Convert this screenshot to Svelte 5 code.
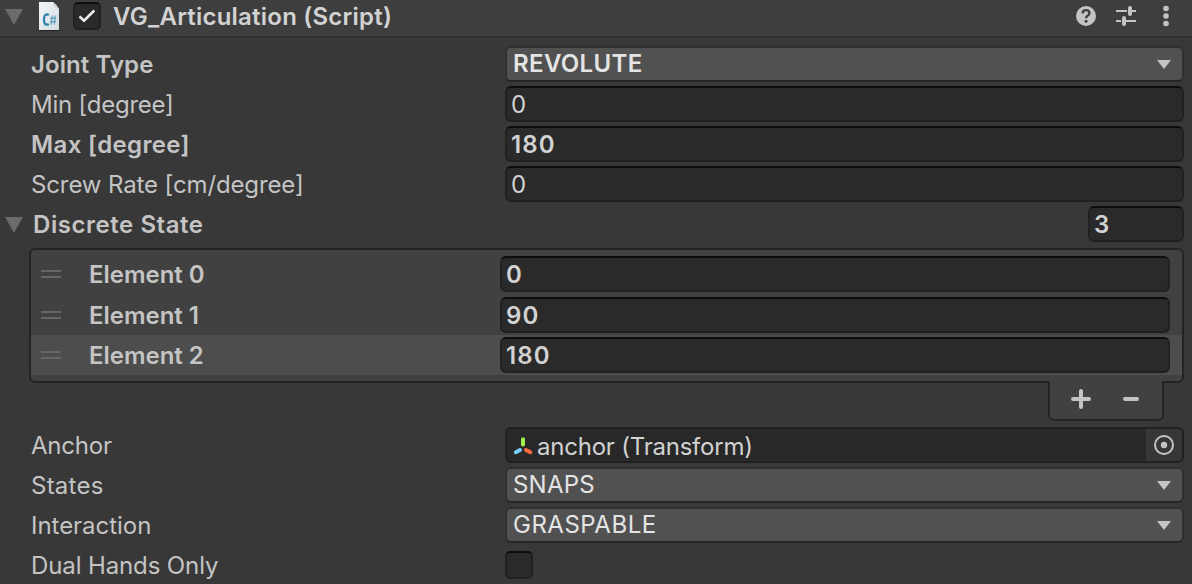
<script>
  const properties = [
    { label: 'Joint Type', value: 'REVOLUTE', kind: 'select', bold: true, track: 0.08, valueTrack: 0.35 },
    { label: 'Min [degree]', value: '0', kind: 'number', track: -0.24 },
    { label: 'Max [degree]', value: '180', kind: 'number', bold: true, track: 0.36, valueTrack: 1.1 },
    { label: 'Screw Rate [cm/degree]', value: '0', kind: 'number', track: -0.12 },
  ];
  const elements = [
    { label: 'Element 0', value: '0' },
    { label: 'Element 1', value: '90' },
    { label: 'Element 2', value: '180', selected: true },
  ];
  const options = [
    { label: 'States', value: 'SNAPS', kind: 'select', track: 0.25, valueTrack: 0.2 },
    { label: 'Interaction', value: 'GRASPABLE', kind: 'select', track: -0.03, valueTrack: 0.5 },
  ];
</script>

{#snippet foldout()}
  <svg class="foldout" width="18" height="16" viewBox="0 0 18 16"><path d="M0 0H18L9 16Z" fill="#6b6b6b" /></svg>
{/snippet}

{#snippet row(p)}
  <div class="row" class:bold={p.bold}>
    <span class="label" style:letter-spacing="{p.track}px">{p.label}</span>
    {#if p.kind === 'select'}
      <div class="select">
        <span style:letter-spacing="{p.valueTrack}px">{p.value}</span>
        <svg width="14" height="9" viewBox="0 0 14 9"><path d="M0 0H14L7 9Z" fill="#c4c4c4" /></svg>
      </div>
    {:else}
      <div class="field" style:letter-spacing="{p.valueTrack ?? 0}px">{p.value}</div>
    {/if}
  </div>
{/snippet}

<div class="inspector">
  <header>
    {@render foldout()}
    <svg class="script" width="22" height="30" viewBox="0 0 22 30">
      <defs>
        <linearGradient id="paper" x1="0" y1="0" x2="1" y2="1">
          <stop offset="0" stop-color="#f3f5f7" /><stop offset="1" stop-color="#d5dde2" />
        </linearGradient>
        <linearGradient id="fold" x1="0" y1="1" x2="1" y2="0">
          <stop offset="0" stop-color="#ffffff" /><stop offset="1" stop-color="#8b98a3" />
        </linearGradient>
      </defs>
      <path d="M1 1H15Q18 3 21 8V29H1Z" fill="url(#paper)" />
      <path d="M15 1Q17 5 16 7Q19 6.500 21 8Q18.500 3 15 1Z" fill="url(#fold)" />
      <path d="M1 29.500H21" stroke="#222" stroke-width="1" />
      <path d="M10.800 14Q9.800 13.300 8.800 13.300Q6 13.500 6 18.500Q6 23.600 8.800 23.700Q9.900 23.700 10.800 23" fill="none" stroke="#2e86ae" stroke-width="2.300" />
      <path d="M14.200 14.500L13.200 23.500M17.200 14.500L16.200 23.500M12.200 17.300H18.200M11.900 20.600H17.900" fill="none" stroke="#5a9fbe" stroke-width="1.200" />
    </svg>
    <div class="check">
      <svg width="18" height="14" viewBox="0 0 18 14"><path d="M1.500 7.300L6 11.700L16.300 1.500" fill="none" stroke="#eee" stroke-width="2.500" /></svg>
    </div>
    <h1>VG_Articulation (Script)</h1>
    <svg class="tools" width="104" height="24" viewBox="0 0 104 24">
      <circle cx="12" cy="12" r="10" fill="#c4c4c4" />
      <path d="M8.600 9.400Q8.600 6.200 12 6.200T15.400 9.200Q15.400 10.800 13.600 11.800Q12 12.700 12 14.200" fill="none" stroke="#3e3e3e" stroke-width="2.300" />
      <circle cx="12" cy="17.200" r="1.500" fill="#3e3e3e" />
      <path d="M42 7H53M58 7H62M42 17H47M52 17H62" stroke="#c4c4c4" stroke-width="2" />
      <path d="M56 4V10M50 14V20" stroke="#c4c4c4" stroke-width="4" stroke-linecap="round" />
      <g fill="#c4c4c4"><circle cx="92" cy="4.500" r="2.800" /><circle cx="92" cy="12" r="2.800" /><circle cx="92" cy="19.500" r="2.800" /></g>
    </svg>
  </header>

  <main>
    {#each properties as p}{@render row(p)}{/each}

    <div class="row bold state">
      {@render foldout()}
      <span class="label">Discrete State</span>
      <div class="field count">3</div>
    </div>

    <div class="list">
      {#each elements as e}
        <div class="element" class:selected={e.selected}>
          <i class="handle"></i>
          <span class="name">{e.label}</span>
          <div class="field">{e.value}</div>
        </div>
      {/each}
    </div>
    <div class="footer">
      <svg width="20" height="20" viewBox="0 0 20 20"><path d="M2 10H18M10 2V18" stroke="#c4c4c4" stroke-width="4" stroke-linecap="round" /></svg>
      <svg width="16" height="20" viewBox="0 0 16 20"><path d="M2 10H14" stroke="#c4c4c4" stroke-width="4" stroke-linecap="round" /></svg>
    </div>

    <div class="row">
      <span class="label anchor">Anchor</span>
      <div class="object">
        <svg class="axes" width="20" height="18" viewBox="0 0 20 18">
          <g stroke-width="4" stroke-linecap="round">
            <path d="M10 2.200V7.500" stroke="#a4f04c" />
            <path d="M2.800 15.200L7 13" stroke="#76cffb" />
            <path d="M13 13L17.300 15.200" stroke="#fb6b3c" />
          </g>
        </svg>
        <span>anchor (Transform)</span>
        <div class="picker">
          <svg width="20" height="20" viewBox="0 0 20 20"><circle cx="10" cy="10" r="9" fill="none" stroke="#c4c4c4" stroke-width="2" /><circle cx="10" cy="10" r="3.200" fill="#c4c4c4" /></svg>
        </div>
      </div>
    </div>
    {#each options as p}{@render row(p)}{/each}
    <div class="row">
      <span class="label hands">Dual Hands Only</span>
      <div class="check"></div>
    </div>
  </main>
</div>

<style>
  :global(body) { margin: 0; background: #383838; overflow: hidden; }
  .inspector {
    width: 1192px; height: 584px; overflow: hidden; box-sizing: border-box;
    background: #383838; color: #c4c4c4;
    font: 400 24px/36px Inter, sans-serif; letter-spacing: 0.3px; white-space: nowrap;
  }
  .inspector * { box-sizing: border-box; }
  svg { display: block; flex: none; }
  header {
    display: flex; align-items: flex-start; height: 38px; padding-left: 5px;
    background: #3e3e3e; border-bottom: 2px solid #303030;
  }
  header .foldout { margin-top: 9px; }
  .script { margin: 1px 0 0 15px; }
  header .check { margin: 2px 0 0 13px; }
  h1 { margin: -1px 0 0 12px; font-size: 24px; line-height: 36px; font-weight: 600; color: #d2d2d2; letter-spacing: 0.22px; }
  .tools { margin: 4px 14px 0 auto; }
  .check {
    display: flex; align-items: center; justify-content: center; flex: none;
    width: 28px; height: 28px; background: #2a2a2a; border: 2px solid #212121;
    border-top-color: #0d0d0d; border-radius: 5px;
  }
  main { padding: 6px 8px 0 0; }
  .row { display: flex; align-items: center; height: 40px; padding-left: 31px; }
  .label { width: 474px; flex: none; padding-top: 2px; }
  .anchor { letter-spacing: -0.2px; }
  .hands { letter-spacing: -0.12px; }
  .bold, .element { font-weight: 600; }
  .field, .select, .object {
    display: flex; align-items: center; flex: 1; min-width: 0; height: 36px;
    border: 2px solid #212121; border-radius: 6px;
  }
  .field {
    background: #2a2a2a; border-top-color: #0d0d0d; color: #d2d2d2;
    padding: 2px 0 0 4px;
  }
  .select {
    justify-content: space-between; background: #515151; border-color: #303030;
    border-bottom-color: #242424; color: #e4e4e4; padding: 0 11px 0 6px;
  }
  .state { padding-left: 5px; }
  .state .foldout { margin-top: 2px; }
  .state .label { width: auto; margin-left: 10px; letter-spacing: 0.55px; }
  .count { flex: none; width: 96px; margin-left: auto; }
  .list {
    margin: 4px 0 0 29px; height: 135px; padding: 4px 0 0;
    background: #414141; border: 2px solid #242424; border-radius: 6px;
  }
  .element { display: flex; align-items: center; height: 40px; padding: 0 12px 0 10px; }
  .element:first-child { margin-bottom: 1px; }
  .selected { background: #4d4d4d; }
  .handle { width: 20px; height: 8px; border: solid #666; border-width: 2px 0; }
  .name { width: 411px; margin-left: 28px; flex: none; padding-top: 1px; letter-spacing: -0.03px; }
  .element .field { letter-spacing: 1.1px; }
  .footer {
    display: flex; align-items: center; gap: 32px; position: relative;
    width: 116px; height: 40px; margin: -2px 20px 4px auto; padding-left: 21px;
    background: #414141; border: 2px solid #242424; border-top: 0; border-radius: 0 0 6px 6px;
  }
  .footer svg { margin-top: -2px; }
  .object { background: #282828; color: #d2d2d2; padding-left: 6px; }
  .object span { margin: 3px 0 0 4px; letter-spacing: -0.22px; }
  .axes { margin-top: 1px; }
  .picker {
    display: flex; align-items: center; justify-content: center; margin-left: auto;
    width: 36px; height: 32px; background: #373737; border-radius: 0 4px 4px 0;
  }
</style>
